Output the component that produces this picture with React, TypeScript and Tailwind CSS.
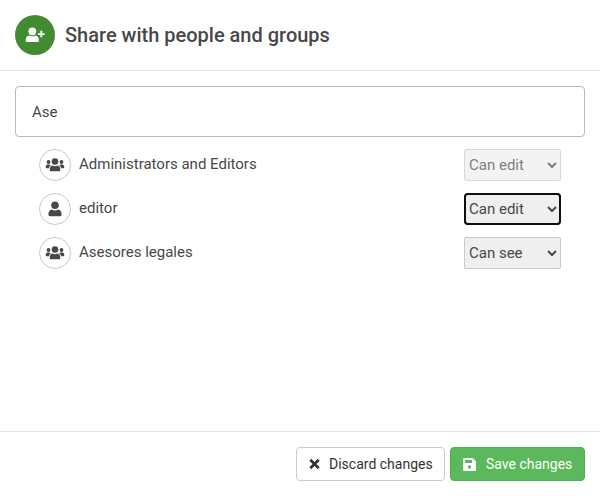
type Row = { name: string; group: boolean; access: string; disabled?: boolean; focused?: boolean };

const rows: Row[] = [
  { name: 'Administrators and Editors', group: true, access: 'Can edit', disabled: true },
  { name: 'editor', group: false, access: 'Can edit', focused: true },
  { name: 'Asesores legales', group: true, access: 'Can see' },
];

function PersonAddIcon() {
  return (
    <svg className="h-4 w-5" viewBox="0 0 20 16" fill="currentColor">
      <circle cx="7.3" cy="4.3" r="3.9" />
      <path d="M.7 13.400c0-3 1.300-4.700 3.500-5 .9.6 1.900.9 3.100.9s2.200-.3 3.100-.9c2.200.3 3.500 2 3.500 5 0 1-.6 1.600-1.600 1.600h-10C1.300 15 .7 14.400.7 13.400z" />
      <path d="M15.400 3.800h1.800v2.400h2.400V8h-2.400v2.300h-1.800V8H13V6.200h2.400z" />
    </svg>
  );
}

function GroupIcon() {
  return (
    <svg className="h-4 w-5" viewBox="0 0 20 16" fill="currentColor">
      <circle cx="10" cy="4.500" r="3.300" />
      <circle cx="3.500" cy="5" r="1.900" />
      <circle cx="16.500" cy="5" r="1.900" />
      <path d="M4.700 12.900c0-2.500 1-4 2.700-4.300.8.500 1.600.7 2.600.7s1.800-.2 2.600-.7c1.700.3 2.700 1.800 2.700 4.300 0 .9-.5 1.400-1.400 1.400H6.100c-.9 0-1.400-.5-1.400-1.400z" />
      <path d="M.7 10.200c0-1.500.7-2.400 1.900-2.600h1.900c.5.1.9.300 1.200.6-.9.700-1.500 1.700-1.700 3.100H1.600c-.6 0-.9-.4-.9-1.100zM19.300 10.200c0-1.500-.7-2.400-1.900-2.600h-1.900c-.5.1-.9.300-1.200.6.900.7 1.500 1.700 1.700 3.100h2.400c.6 0 .9-.4.9-1.100z" />
    </svg>
  );
}

function PersonIcon() {
  return (
    <svg className="h-4 w-3.5" viewBox="0 0 14 16" fill="currentColor">
      <circle cx="7" cy="4.300" r="3.800" />
      <path d="M.4 13.600c0-3.100 1.300-4.800 3.500-5.100.9.600 1.900.9 3.100.9s2.200-.3 3.100-.9c2.200.3 3.500 2 3.500 5.100 0 1.100-.6 1.700-1.700 1.700H2.100C1 15.300.4 14.700.4 13.600z" />
    </svg>
  );
}

function CrossIcon() {
  return (
    <svg className="mr-[9px] h-3 w-[11px]" viewBox="0 0 11 12" fill="none" stroke="currentColor" strokeWidth="2.7">
      <path d="M1.300 1.800l8.400 8.400M9.700 1.800l-8.400 8.400" />
    </svg>
  );
}

function DiskIcon() {
  return (
    <svg className="mr-[10px] size-[13px]" viewBox="0 0 13 13" fill="currentColor" fillRule="evenodd">
      <path d="M1.500 0h8L13 3.200v8.300c0 1-.5 1.500-1.500 1.500h-10C.5 13 0 12.500 0 11.500v-10C0 .5.500 0 1.500 0zM2 2v3h7V2zM6.500 7.200a1.800 1.800 0 1 0 0 3.600 1.800 1.800 0 1 0 0-3.600z" />
    </svg>
  );
}

export default function App() {
  return (
    <div className="flex h-[496px] w-[600px] flex-col bg-white font-['Roboto',sans-serif] text-[15px] text-[#484848]">
      <header className="flex h-[71px] items-center gap-2.5 border-b border-[#e5e5e5] px-[15px]">
        <div className="flex size-10 items-center justify-center rounded-full bg-[#418c31] text-white">
          <PersonAddIcon />
        </div>
        <h1 className="text-[20px] font-medium">Share with people and groups</h1>
      </header>
      <main className="flex-1 px-[15px] pt-[15px]">
        <input
          className="block h-[51px] w-full rounded-[4px] border border-[#b9b9b9] px-4 text-[15px] outline-none"
          defaultValue="Ase"
        />
        <ul className="px-6 pt-3">
          {rows.map((row) => (
            <li key={row.name} className="mb-3 flex h-8 items-center">
              <span className="flex size-8 items-center justify-center rounded-full border border-[#c9c9c9]">
                {row.group ? <GroupIcon /> : <PersonIcon />}
              </span>
              <span className="ml-2 flex-1 pb-0.5">{row.name}</span>
              <select
                disabled={row.disabled}
                defaultValue={row.access}
                className={`h-8 w-[97px] border bg-[#efefef] text-[15px] ${
                  row.focused
                    ? 'rounded-[4px] border-[#101010] outline-2 -outline-offset-2 outline-[#101010]'
                    : 'rounded-[2px] border-[#c9c9c9] outline-none'
                } ${row.disabled ? 'opacity-70' : ''}`}
              >
                <option>Can edit</option>
                <option>Can see</option>
              </select>
            </li>
          ))}
        </ul>
      </main>
      <footer className="flex h-[65px] items-start justify-end gap-[5px] border-t border-[#e5e5e5] px-[15px] pt-[15px] text-[14px]">
        <button className="flex h-[34px] w-[149px] items-center rounded-[4px] border border-[#ccc] bg-white pl-3 text-[#333]">
          <CrossIcon />
          Discard changes
        </button>
        <button className="flex h-[34px] w-[135px] items-center rounded-[4px] border border-[#4cae4c] bg-[#5cb85c] pl-3 text-white">
          <DiskIcon />
          Save changes
        </button>
      </footer>
    </div>
  );
}
